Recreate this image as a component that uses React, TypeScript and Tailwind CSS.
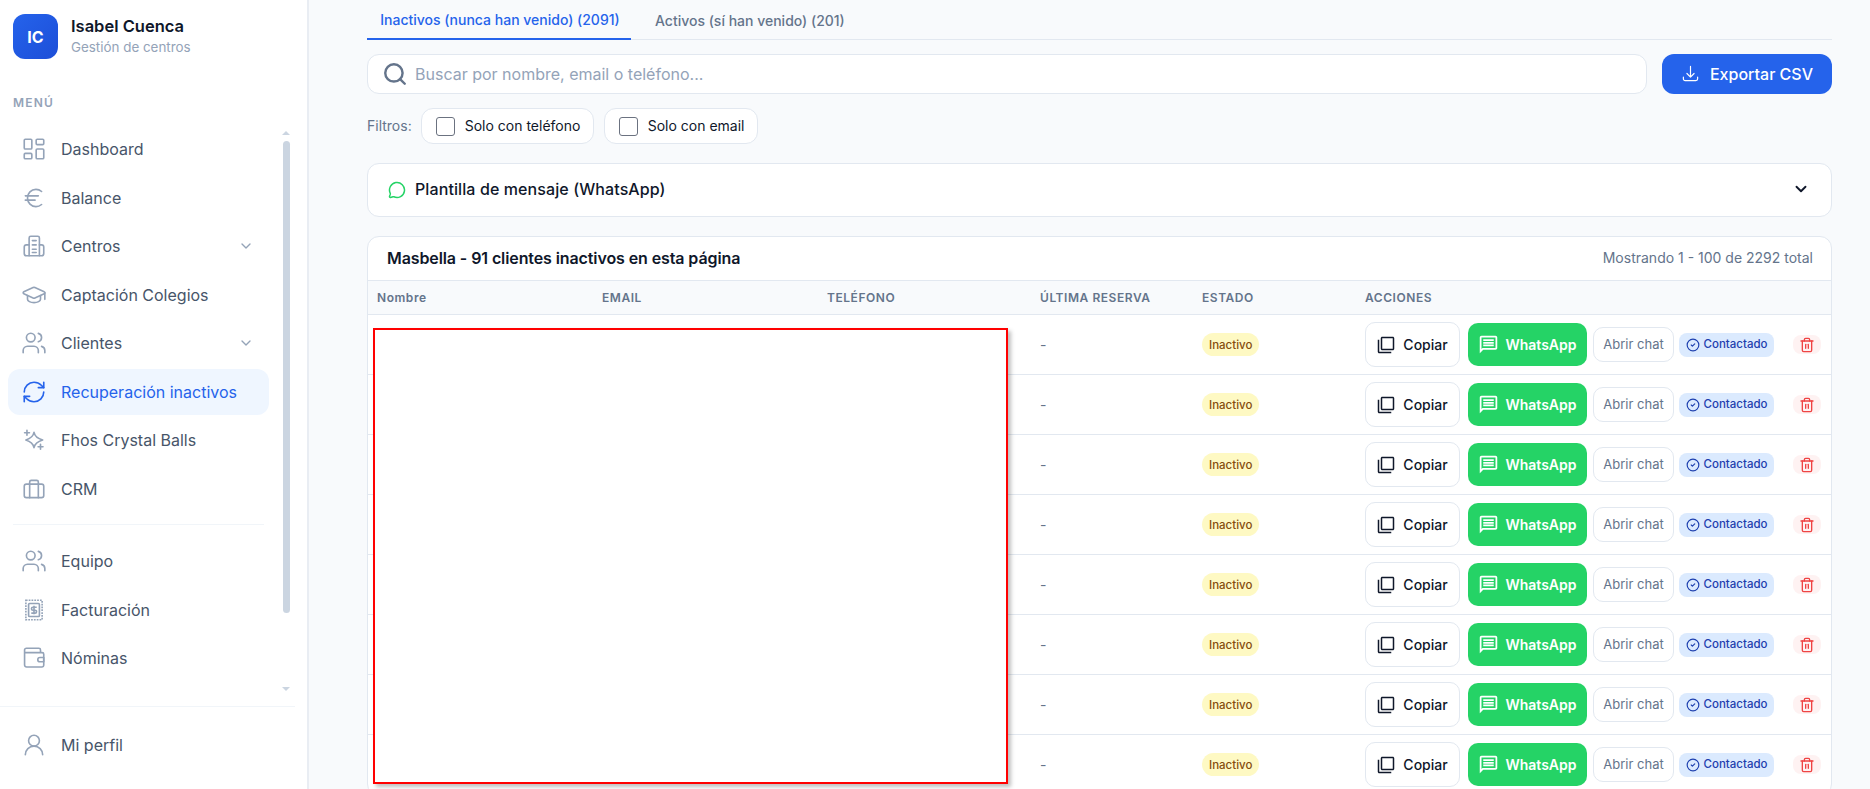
import {
  ChevronDown,
  CircleCheck,
  Euro,
  GraduationCap,
  LayoutDashboard,
  MessageCircle,
  RefreshCw,
  Search,
  Trash2,
  UserRound,
  Users,
} from "lucide-react";
import { HiOutlineArrowDownTray } from "react-icons/hi2";
import { MdOutlineFilterNone, MdOutlineMessage } from "react-icons/md";

const BuildingIcon = ({ className }: { className?: string }) => (
  <svg viewBox="0 0 24 24" fill="none" stroke="currentColor" strokeWidth="1.5" strokeLinecap="round" strokeLinejoin="round" className={className}>
    <path d="M7.500 21V4.500A1.500 1.500 0 0 1 9 3h6.500A1.500 1.500 0 0 1 17 4.500V21" />
    <path d="M7.500 11H5a2 2 0 0 0-2 2v6a2 2 0 0 0 2 2h14a2 2 0 0 0 2-2v-6a2 2 0 0 0-2-2h-2" />
    <path d="M10.500 7h3.500M10.500 11h3.500M10.500 15h3.500M10.500 18h3.500" />
  </svg>
);

const SparkIcon = ({ className }: { className?: string }) => (
  <svg viewBox="0 0 24 24" fill="none" stroke="currentColor" strokeWidth="1.5" strokeLinecap="round" strokeLinejoin="round" className={className}>
    <path d="M12 5Q13 10 20 12 13 14 12 19 11 14 4.500 12 11 10 12 5z" />
    <path d="M5.500 3v4.500M3.300 5.300h4.500M18 16v4.500M15.800 18.200h4.500" />
  </svg>
);

const CaseIcon = ({ className }: { className?: string }) => (
  <svg viewBox="0 0 24 24" fill="none" stroke="currentColor" strokeWidth="1.5" strokeLinecap="round" strokeLinejoin="round" className={className}>
    <rect x="3" y="7.500" width="18" height="12.500" rx="2" />
    <path d="M8 20V5.500A1.500 1.500 0 0 1 9.500 4h5A1.500 1.500 0 0 1 16 5.500V20" />
  </svg>
);

const ReceiptIcon = ({ className }: { className?: string }) => (
  <svg viewBox="0 0 24 24" fill="none" stroke="currentColor" strokeWidth="1.5" className={className}>
    <path d="M4.500 3h15v18h-15z" strokeDasharray="1.600 1" />
    <rect x="7" y="6" width="10" height="12" rx="1" />
    <path d="M14.500 9.500H11a1.300 1.300 0 0 0 0 2.700h2a1.300 1.300 0 0 1 0 2.700H9.500M12 8v8" />
  </svg>
);

const WalletIcon = ({ className }: { className?: string }) => (
  <svg viewBox="0 0 24 24" fill="none" stroke="currentColor" strokeWidth="1.5" strokeLinecap="round" strokeLinejoin="round" className={className}>
    <path d="M18 7V4.500A1.500 1.500 0 0 0 16.500 3H5A1.700 1.700 0 0 0 3.300 4.700V18.500A1.800 1.800 0 0 0 5.100 20.300H19.500A1.500 1.500 0 0 0 21 18.800V8.500A1.500 1.500 0 0 0 19.500 7H3.300" />
    <path d="M21 11.500h-3.500a2 2 0 0 0 0 4H21z" />
  </svg>
);

type NavEntry = {
  label: string;
  Icon: ({ className }: { className?: string }) => React.ReactNode;
  chevron?: boolean;
  active?: boolean;
};

const mainNav: NavEntry[] = [
  { label: "Dashboard", Icon: LayoutDashboard },
  { label: "Balance", Icon: Euro },
  { label: "Centros", Icon: BuildingIcon, chevron: true },
  { label: "Captación Colegios", Icon: GraduationCap },
  { label: "Clientes", Icon: Users, chevron: true },
  { label: "Recuperación inactivos", Icon: RefreshCw, active: true },
  { label: "Fhos Crystal Balls", Icon: SparkIcon },
  { label: "CRM", Icon: CaseIcon },
];

const otherNav: NavEntry[] = [
  { label: "Equipo", Icon: Users },
  { label: "Facturación", Icon: ReceiptIcon },
  { label: "Nóminas", Icon: WalletIcon },
];

const NavItem = ({ item }: { item: NavEntry }) => {
  const { Icon } = item;
  return (
    <div
      className={`mb-[2px] flex h-[46.500px] items-center rounded-xl pl-[13px] pr-[15px] text-base ${
        item.active ? "bg-[#eff6ff] text-[#2563eb]" : "text-[#475569]"
      }`}
    >
      <Icon className={`h-[26px] w-[26px] shrink-0 stroke-[1.5] ${item.active ? "text-[#2563eb]" : "text-[#94a3b8]"}`} />
      <span className="ml-[14px] flex-1 whitespace-nowrap">{item.label}</span>
      {item.chevron && <ChevronDown className="h-4 w-4 text-[#94a3b8]" />}
    </div>
  );
};

const Sidebar = () => (
  <aside className="flex h-[789px] w-[309px] shrink-0 flex-col border-r-2 border-[#e9edf3] bg-white">
    <div className="flex items-center gap-[13px] pl-[13px] pt-[14px]">
      <div className="flex h-[45px] w-[45px] items-center justify-center rounded-xl bg-gradient-to-br from-[#2563eb] to-[#1d4ed8] text-base font-bold text-white">
        IC
      </div>
      <div className="-mt-[2px]">
        <div className="text-[16.500px] leading-[22px] font-semibold text-[#0f172a]">Isabel Cuenca</div>
        <div className="text-[13.400px] leading-[20px] text-[#94a3b8]">Gestión de centros</div>
      </div>
    </div>
    <div className="mt-[36px] pl-[13px] text-xs leading-4 font-semibold tracking-[1.200px] text-[#94a3b8]">MENÚ</div>
    <div className="mt-[11px] flex h-[584px] shrink-0">
      <nav className="w-[282px] pl-2 pr-[13px] pt-[4px]">
        {mainNav.map((item) => (
          <NavItem key={item.label} item={item} />
        ))}
        <div className="mx-[5px] mb-[13px] mt-[12px] border-t border-[#f1f5f9]" />
        {otherNav.map((item) => (
          <NavItem key={item.label} item={item} />
        ))}
      </nav>
      <div className="flex w-[8px] flex-col items-center pt-[9px]">
        <div className="h-0 w-0 border-x-[4px] border-b-[4px] border-x-transparent border-b-[#cbd5e1]" />
        <div className="mt-[6px] h-[472px] w-[7px] rounded-full bg-[#cbd5e1]" />
        <div className="mt-[74px] h-0 w-0 border-x-[4px] border-t-[4px] border-x-transparent border-t-[#cbd5e1]" />
      </div>
    </div>
    <div className="mr-[12px] border-t border-[#f1f5f9] pl-2 pr-[16px] pt-[15px]">
      <NavItem item={{ label: "Mi perfil", Icon: UserRound }} />
    </div>
  </aside>
);

const Row = () => (
  <tr className="h-[60px] border-b border-[#e2e8f0]">
    <td />
    <td />
    <td />
    <td className="pl-[10px] text-sm text-[#64748b]">-</td>
    <td className="pl-[10px]">
      <span className="mb-[2px] inline-block rounded-full bg-[#fef9c3] px-[7px] py-[3.500px] text-[11.500px] leading-4 font-medium text-[#854d0e]">Inactivo</span>
    </td>
    <td className="pl-[10px]">
      <div className="flex items-center">
        <button className="flex h-[45px] w-[95px] items-center justify-center gap-[8px] rounded-[10px] border border-[#e2e8f0] bg-white text-sm font-medium text-[#0f172a]">
          <MdOutlineFilterNone className="h-[18px] w-[18px]" />
          Copiar
        </button>
        <button className="ml-[8px] flex h-[43px] w-[119px] items-center justify-center gap-[6px] rounded-[10px] bg-[#25d366] text-sm font-semibold text-white">
          <MdOutlineMessage className="h-[21px] w-[21px]" />
          WhatsApp
        </button>
        <button className="ml-[6px] h-[35px] w-[81px] rounded-[10px] border border-[#e2e8f0] bg-white text-[13px] text-[#64748b]">
          Abrir chat
        </button>
        <span className="ml-[5px] flex h-[24px] w-[95px] items-center justify-center gap-[4px] rounded-lg bg-[#dbeafe] text-[11.500px] font-medium text-[#1e40af]">
          <CircleCheck className="h-[14px] w-[14px]" />
          Contactado
        </span>
        <span className="ml-[19px] flex h-[19px] w-[28px] items-center justify-center rounded-lg bg-[#fef2f2]">
          <Trash2 className="h-4 w-4 text-[#ef4444]" />
        </span>
      </div>
    </td>
  </tr>
);

export default function App() {
  return (
    <div className="flex h-[789px] w-[1870px] overflow-hidden bg-[#f8fafc] font-['Inter',sans-serif]">
      <Sidebar />
      <main className="w-[1561px] overflow-hidden pl-[58px] pr-[38px]">
        <div className="flex h-[40px] border-b border-[#e2e8f0] text-sm">
          <div className="flex h-[40px] w-[264px] items-center justify-center border-b-2 border-[#2563eb] pl-[2px] pt-[1px] font-medium text-[#2563eb]">
            Inactivos (nunca han venido) (2091)
          </div>
          <div className="ml-[24px] flex h-[40px] items-center pt-[1px] font-medium text-[#64748b]">Activos (sí han venido) (201)</div>
        </div>

        <div className="mt-[14px] flex gap-[15px]">
          <div className="flex h-[40px] flex-1 items-center rounded-xl border border-[#e2e8f0] bg-white pl-[14px]">
            <Search className="h-[26px] w-[26px] text-[#64748b]" strokeWidth={2.25} />
            <span className="mb-[1px] ml-[7px] text-base text-[#94a3b8]">Buscar por nombre, email o teléfono...</span>
          </div>
          <button className="flex h-[40px] w-[170px] items-center justify-center gap-[10px] rounded-xl bg-[#2563eb] pb-[1px] text-base font-medium text-white">
            <HiOutlineArrowDownTray className="h-[19px] w-[19px]" />
            Exportar CSV
          </button>
        </div>

        <div className="mt-[14px] flex items-center text-sm">
          <span className="text-[#64748b]">Filtros:</span>
          <label className="ml-[9px] flex h-[36px] w-[173px] items-center rounded-xl border border-[#e2e8f0] bg-white pl-[14px]">
            <span className="h-[19px] w-[19px] rounded-[3px] border border-[#6b7280] bg-white" />
            <span className="ml-[10px] text-[#0f172a]">Solo con teléfono</span>
          </label>
          <label className="ml-[10px] flex h-[36px] w-[154px] items-center rounded-xl border border-[#e2e8f0] bg-white pl-[14px]">
            <span className="h-[19px] w-[19px] rounded-[3px] border border-[#6b7280] bg-white" />
            <span className="ml-[10px] text-[#0f172a]">Solo con email</span>
          </label>
        </div>

        <div className="mt-[19px] flex h-[54px] items-center rounded-xl border border-[#e2e8f0] bg-white pl-[20px] pr-[21px]">
          <MessageCircle className="h-[18px] w-[18px] text-[#25d366]" />
          <span className="mb-[2px] ml-[9px] flex-1 text-base font-medium tracking-[0.100px] text-[#0f172a]">Plantilla de mensaje (WhatsApp)</span>
          <ChevronDown className="mb-[2px] h-[18px] w-[18px] text-[#0f172a]" strokeWidth={2.5} />
        </div>

        <div className="relative mt-[19px] rounded-xl border border-[#e2e8f0] bg-white">
          <div className="flex h-[43px] items-center justify-between pb-[2px] pl-[19px] pr-[18px]">
            <span className="text-base font-semibold tracking-[-0.100px] text-[#0f172a]">Masbella - 91 clientes inactivos en esta página</span>
            <span className="text-sm text-[#64748b]">Mostrando 1 - 100 de 2292 total</span>
          </div>
          <table className="w-full table-fixed border-collapse">
            <colgroup>
              <col className="w-[224px]" />
              <col className="w-[225px]" />
              <col className="w-[213px]" />
              <col className="w-[162px]" />
              <col className="w-[163px]" />
              <col />
            </colgroup>
            <thead>
              <tr className="h-[34px] border-y border-[#e2e8f0] bg-[#f8fafc] text-left text-xs font-semibold tracking-[0.550px] text-[#64748b]">
                <th className="pl-[9px] font-semibold">Nombre</th>
                <th className="pl-[10px] font-semibold">EMAIL</th>
                <th className="pl-[10px] font-semibold">TELÉFONO</th>
                <th className="pl-[10px] font-semibold">ÚLTIMA RESERVA</th>
                <th className="pl-[10px] font-semibold">ESTADO</th>
                <th className="pl-[10px] font-semibold">ACCIONES</th>
              </tr>
            </thead>
            <tbody>
              {Array.from({ length: 8 }).map((_, i) => (
                <Row key={i} />
              ))}
            </tbody>
          </table>
          <div className="absolute left-[5px] top-[91px] h-[456px] w-[635px] border-2 border-[#ff0000] bg-white shadow-[3px_3px_4px_rgba(0,0,0,0.25)]" />
        </div>
      </main>
    </div>
  );
}
